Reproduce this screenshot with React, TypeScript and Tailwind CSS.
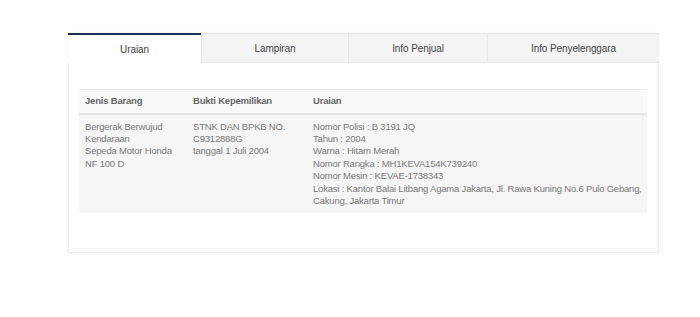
import React from 'react'

const tabs = [
  { label: 'Uraian', width: 'w-[133px]' },
  { label: 'Lampiran', width: 'w-[147px]' },
  { label: 'Info Penjual', width: 'w-[139px]' },
  { label: 'Info Penyelenggara', width: 'flex-1' },
]

const uraian = [
  'Nomor Polisi : B 3191 JQ',
  'Tahun : 2004',
  'Warna : Hitam Merah',
  'Nomor Rangka : MH1KEVA154K739240',
  'Nomor Mesin : KEVAE-1738343',
  'Lokasi : Kantor Balai Litbang Agama Jakarta, Jl. Rawa Kuning No.6 Pulo Gebang, Cakung, Jakarta Timur',
]

function App() {
  return (
    <div className="min-h-screen bg-white pt-[33px] pl-[68px] font-['Liberation_Sans',Arial,sans-serif]">
      <div className="w-[591px] h-[220px] bg-white border border-[#ececec] shadow-[0_0_3px_rgba(0,0,0,0.06)]">
        <div className="flex h-[30px] -mt-px -mx-px">
          {tabs.map((tab, i) => (
            <div
              key={tab.label}
              className={
                i === 0
                  ? `${tab.width} flex items-center justify-center border-t-2 border-[#1e2f4f] bg-white text-[10px] tracking-[-0.1px] text-[#444]`
                  : `${tab.width} flex items-center justify-center bg-[#f4f4f4] border-l border-b border-t border-[#e6e6e6] text-[10px] tracking-[-0.1px] text-[#444]`
              }
            >
              {tab.label}
            </div>
          ))}
        </div>
        <div className="px-[10px] pt-[26px]">
          <table className="w-[568px] table-fixed text-[9.5px] tracking-[-0.2px] leading-[12.4px] text-[#7a7a7a] border-collapse">
            <thead>
              <tr className="bg-[#f9f9f9] border-t border-[#e8e8e8] border-b-2 border-b-[#e4e4e4]">
                <th className="w-[108px] h-[24px] pl-[6px] text-left font-bold text-[#666]">Jenis Barang</th>
                <th className="w-[120px] pl-[6px] text-left font-bold text-[#666]">Bukti Kepemilikan</th>
                <th className="pl-[6px] text-left font-bold text-[#666]">Uraian</th>
              </tr>
            </thead>
            <tbody>
              <tr className="bg-[#f5f5f5] align-top">
                <td className="pl-[6px] pt-[6px] pb-[6px]">
                  Bergerak Berwujud
                  <br />
                  Kendaraan
                  <br />
                  Sepeda Motor Honda
                  <br />
                  NF 100 D
                </td>
                <td className="pl-[6px] pt-[6px]">
                  STNK DAN BPKB NO.
                  <br />
                  C9312888G
                  <br />
                  tanggal 1 Juli 2004
                </td>
                <td className="pl-[6px] pt-[6px] pb-[6px] pr-0">
                  {uraian.map((line) => (
                    <div key={line}>{line}</div>
                  ))}
                </td>
              </tr>
            </tbody>
          </table>
        </div>
      </div>
    </div>
  )
}

export default App
